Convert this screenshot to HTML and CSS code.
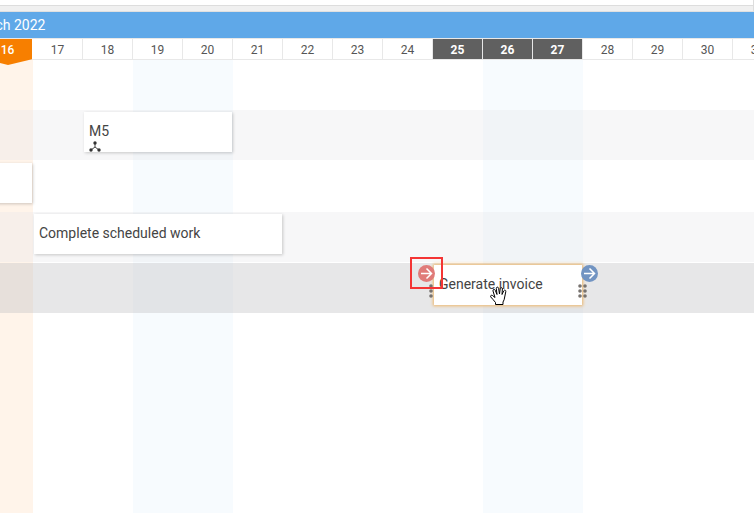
FILE: index.html
```html
<!DOCTYPE html>
<html lang="en">
<head>
<meta charset="utf-8">
<title>Schedule</title>
<link rel="stylesheet" href="styles.css">
</head>
<body>
<div class="topbar"></div>
<main class="timeline">
  <header class="month">March 2022</header>
  <div class="days">
    <div class="day today">16</div><div class="day">17</div><div class="day">18</div><div class="day">19</div>
    <div class="day">20</div><div class="day">21</div><div class="day">22</div><div class="day">23</div>
    <div class="day">24</div><div class="day active">25</div><div class="day active">26</div><div class="day active">27</div>
    <div class="day">28</div><div class="day">29</div><div class="day">30</div><div class="day">31</div>
  </div>
  <div class="body">
    <div class="shades">
      <div class="shade now"></div><div class="shade weekend first"></div><div class="shade weekend second"></div>
    </div>
    <div class="rows">
      <div class="row"></div>
      <div class="row alt">
        <div class="card span-m5">M5
          <svg class="branch" viewBox="0 0 12 12" width="12" height="12"><path d="M6 2v4L2 9M6 6l4 3" fill="none" stroke="#444"/><g fill="#333"><circle cx="6" cy="2" r="1.7"/><circle cx="2" cy="9" r="1.7"/><circle cx="10" cy="9" r="1.7"/></g></svg>
        </div>
      </div>
      <div class="row"><div class="card span-past"></div></div>
      <div class="row alt"><div class="card span-work">Complete scheduled work</div></div>
      <div class="row selected">
        <div class="card span-invoice">Generate invoice</div>
        <div class="tools span-invoice">
          <svg class="dots dots-left" viewBox="0 0 4 16" width="4" height="16" fill="#77726e"><circle cx="2" cy="3" r="1.8"/><circle cx="2" cy="8" r="1.8"/><circle cx="2" cy="13" r="1.8"/></svg>
          <svg class="dots dots-right" viewBox="0 0 10 16" width="10" height="16" fill="#77726e"><circle cx="2" cy="3" r="1.8"/><circle cx="2" cy="8" r="1.8"/><circle cx="2" cy="13" r="1.8"/><circle cx="7" cy="3" r="1.8"/><circle cx="7" cy="8" r="1.8"/><circle cx="7" cy="13" r="1.8"/></svg>
          <button class="link link-left" aria-label="Link from start"><svg viewBox="0 0 17 17" width="17" height="17"><circle cx="8.500" cy="8.500" r="8.500" fill="#e07b79"/><path d="M3 8.500h10.500M8.500 3.500l5 5-5 5" fill="none" stroke="#fff" stroke-width="1.500"/></svg></button>
          <button class="link link-right" aria-label="Link from end"><svg viewBox="0 0 17 17" width="17" height="17"><circle cx="8.500" cy="8.500" r="8.500" fill="#7294c2"/><path d="M3 8.500h10.500M8.500 3.500l5 5-5 5" fill="none" stroke="#fff" stroke-width="1.500"/></svg></button>
          <div class="highlight"></div>
          <svg class="hand" viewBox="0 0 18 20" width="18" height="20"><path d="M5.500 18.500v-2L3 13.500.8 11c-.8-1 .4-2.300 1.700-1.500L5 11.500 3 5c-.4-1.800 1.600-2.300 2.200-.8L7 8.500 6.300 2.500c0-1.800 2-1.800 2.300-.2L9.500 8l.7-5.300c.3-1.600 2.300-1.400 2.200.3L12 8.500l1.800-3.700c.7-1.300 2.400-.6 2 .8L14.700 11c-.2 2-.7 3.500-1.700 5v2.500z" fill="#fff" stroke="#000" stroke-linejoin="round"/></svg>
        </div>
      </div>
    </div>
  </div>
</main>
</body>
</html>
```
FILE: styles.css
```css
* { box-sizing: border-box; }
html, body { height: 100%; }
body {
  margin: 0;
  display: flex;
  flex-direction: column;
  overflow: hidden;
  background: #fff;
  color: #444;
  font: 14px/20px Roboto, "Liberation Sans", sans-serif;
}
.topbar {
  flex: none;
  height: 12px;
  border-bottom: 1px solid #e0e0e0;
  border-right: 1px solid #ddd;
  background: linear-gradient(#fff 5px, #ddd 5px, #ddd 6px, #f0f0f0 6px);
}
.timeline {
  --columns: 50px;
  flex: 1;
  display: flex;
  flex-direction: column;
  margin-left: -17px;
}
.month {
  height: 26px;
  background: #5fa8e8;
  color: #fff;
  line-height: 26px;
  text-indent: -12px;
}
.days {
  display: grid;
  grid-template-columns: repeat(16, var(--columns));
  grid-template-rows: 20px;
  height: 22px;
  border-top: 1px solid #e8e8e8;
  border-bottom: 1px solid #e8e8e8;
}
.day {
  border-right: 1px solid #e8e8e8;
  color: #555;
  font-size: 12px;
  line-height: 22px;
  text-align: center;
}
.day.active { background: #606060; color: #fff; font-weight: 700; }
.day.today {
  z-index: 1;
  height: 26px;
  background: #f77f00;
  color: #fff;
  font-weight: 500;
  border-color: transparent;
  background-clip: padding-box;
  clip-path: polygon(0 0, 100% 0, 100% 20px, 50% 100%, 0 20px);
}
.body { flex: 1; display: grid; }
.shades, .rows { grid-area: 1 / 1; }
.shades, .row {
  display: grid;
  grid-template-columns: repeat(16, var(--columns));
}
.shade { grid-row: 1; }
.now { grid-column: 1; background: #fff4ea; }
.weekend { background: #f7fbfe; }
.first { grid-column: 4 / span 2; }
.second { grid-column: 11 / span 2; }
.rows { margin-top: -1px; }
.row {
  height: 50px;
  margin-bottom: 1px;
  padding-top: 2px;
}
.alt { background: rgba(229, 229, 232, .32); }
.selected { background: rgba(196, 196, 197, .4); }
.card {
  grid-row: 1;
  height: 40px;
  margin: 0 1px;
  padding: 9px 5px;
  background: #fff;
  box-shadow: 1px 1px 3px rgba(0, 0, 0, .2);
  white-space: nowrap;
}
.branch { display: block; }
.span-m5 { grid-column: 3 / span 3; }
.span-past { grid-column: 1; }
.span-work { grid-column: 2 / span 5; }
.span-invoice { grid-column: 10 / span 3; }
.card.span-invoice { box-shadow: 0 0 3px 1px #efb76b; }
.tools { grid-row: 1; position: relative; }
.tools > * { position: absolute; }
.dots-left { left: -4px; top: 18px; }
.dots-right { left: 145px; top: 18px; }
.link { padding: 0; border: 0; background: none; line-height: 0; }
.link-left { left: -15px; top: 0; }
.link-right { left: 148px; top: 0; }
.highlight { left: -23px; top: -8px; width: 33px; height: 32px; border: 2px solid #f43535; }
.hand { left: 57px; top: 21px; }
```
